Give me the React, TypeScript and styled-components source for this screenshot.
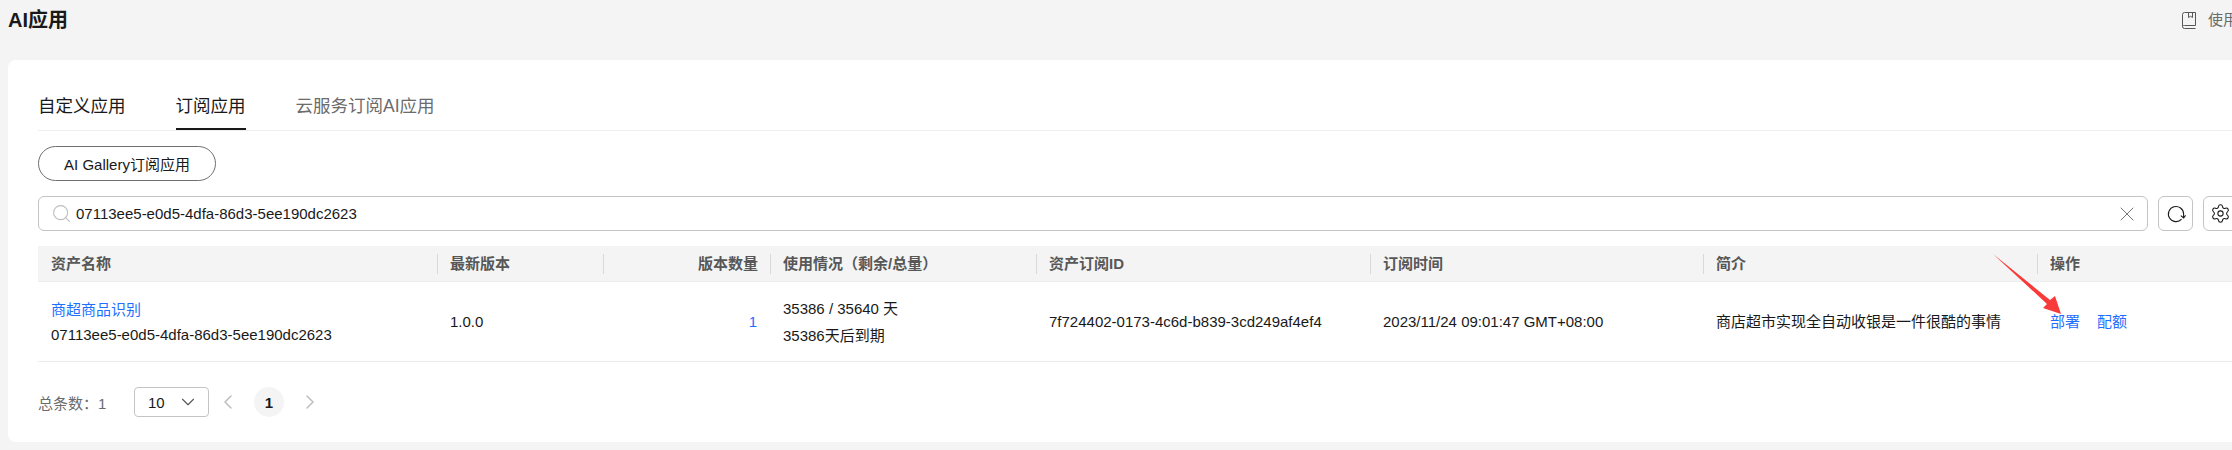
import React from 'react';
import styled, { createGlobalStyle } from 'styled-components';
import { ChevronDown, ChevronLeft, ChevronRight, Search, Settings, X } from 'lucide-react';

const GlobalStyle = createGlobalStyle`
  html, body {
    margin: 0;
    padding: 0;
    width: 2232px;
    height: 450px;
    overflow: hidden;
    background: #f4f4f4;
    font-family: "Liberation Sans", "Noto Sans CJK SC", sans-serif;
    color: #191919;
  }
  * { box-sizing: border-box; }
`;

const Page = styled.div`
  position: relative;
  width: 2232px;
  height: 450px;
  padding-left: 8px;
  overflow: hidden;
`;

const PageHeader = styled.header`
  height: 60px;
  display: flex;
  justify-content: space-between;
  align-items: flex-start;
`;

const PageTitle = styled.h1`
  margin: 7px 0 0;
  font-size: 20px;
  line-height: 26px;
  font-weight: 700;
`;

const GuideLink = styled.div`
  display: flex;
  align-items: center;
  gap: 12px;
  width: 50px;
  margin-top: 11px;
  font-size: 15px;
  line-height: 18px;
  color: #6b6b6b;
  white-space: nowrap;
`;

const Card = styled.main`
  width: 2280px;
  height: 382px;
  padding: 26px 0 0 30px;
  background: #fff;
  border-radius: 8px;
`;

const Tabs = styled.div`
  display: flex;
  gap: 50px;
  height: 45px;
  border-bottom: 1px solid #eeeeee;
`;

const Tab = styled.div<{ $active?: boolean; $muted?: boolean }>`
  height: 44px;
  padding-top: 8px;
  font-size: 17.5px;
  line-height: 24px;
  color: ${(p) => (p.$muted ? '#6b6b6b' : '#191919')};
  border-bottom: ${(p) => (p.$active ? '2px solid #191919' : 'none')};
`;

const Pill = styled.button`
  display: block;
  width: 178px;
  height: 35px;
  margin-top: 15px;
  padding: 0;
  background: #fff;
  border: 1px solid #707070;
  border-radius: 18px;
  font: inherit;
  font-size: 15px;
  color: #191919;
`;

const Toolbar = styled.div`
  display: flex;
  gap: 10px;
  margin-top: 15px;
`;

const SearchBox = styled.div`
  flex: none;
  width: 2110px;
  height: 35px;
  display: flex;
  align-items: center;
  gap: 4px;
  padding: 0 8px 0 12px;
  border: 1px solid #c4c4c4;
  border-radius: 6px;
  font-size: 15px;
`;

const SearchText = styled.span`
  flex: 1;
`;

const IconButton = styled.button`
  flex: none;
  width: 35px;
  height: 35px;
  padding: 0;
  display: flex;
  align-items: center;
  justify-content: center;
  background: #fff;
  border: 1px solid #c4c4c4;
  border-radius: 6px;
`;

const columns = '399px 166px 167px 266px 334px 333px 334px 200px';

const HeadRow = styled.div`
  display: grid;
  grid-template-columns: ${columns};
  height: 36px;
  margin-top: 15px;
  align-items: center;
  background: #f4f4f4;
  border-bottom: 1px solid #ececec;
`;

const HeadCell = styled.div<{ $right?: boolean; $first?: boolean }>`
  height: 20px;
  padding: 0 12px;
  font-size: 15px;
  line-height: 20px;
  font-weight: 700;
  color: #575757;
  white-space: nowrap;
  text-align: ${(p) => (p.$right ? 'right' : 'left')};
  border-left: ${(p) => (p.$first ? '1px solid transparent' : '1px solid #d9d9d9')};
`;

const BodyRow = styled.div`
  display: grid;
  grid-template-columns: ${columns};
  height: 80px;
  align-items: center;
  border-bottom: 1px solid #ececec;
`;

const Cell = styled.div<{ $right?: boolean; $tight?: boolean }>`
  padding: 0 13px;
  font-size: 15px;
  line-height: ${(p) => (p.$tight ? '25px' : '27px')};
  white-space: nowrap;
  text-align: ${(p) => (p.$right ? 'right' : 'left')};
`;

const Link = styled.a`
  color: #1f6fff;
  text-decoration: none;
`;

const Actions = styled.div`
  display: flex;
  gap: 17px;
`;

const Pagination = styled.div`
  display: flex;
  align-items: center;
  height: 30px;
  margin-top: 25px;
  font-size: 15px;
  color: #6b6b6b;
`;

const Total = styled.span`
  width: 96px;
`;

const PageSize = styled.div`
  width: 75px;
  height: 30px;
  display: flex;
  align-items: center;
  justify-content: space-between;
  padding: 0 9px 0 13px;
  border: 1px solid #c4c4c4;
  border-radius: 4px;
  color: #191919;
`;

const Pager = styled.div`
  display: flex;
  align-items: center;
  gap: 14px;
  margin-left: 7px;
`;

const CurrentPage = styled.span`
  width: 30px;
  height: 30px;
  display: flex;
  align-items: center;
  justify-content: center;
  border-radius: 50%;
  background: #f4f4f4;
  color: #191919;
  font-weight: 700;
`;

const Arrow = styled.svg`
  position: absolute;
  left: 1985px;
  top: 245px;
`;

function BookIcon() {
  return (
    <svg width="14" height="17" viewBox="0 0 14 17" fill="none" stroke="#575757" strokeWidth="1" style={{ flex: 'none' }}>
      <path d="M13.5 16.5H2.5a2 2 0 0 1-2-2V2.5a2 2 0 0 1 2-2h11v13H2.5a2 2 0 0 0-2 1" />
      <path d="M6.5.5v5l2-1.2 2 1.2v-5" />
    </svg>
  );
}

function RefreshIcon() {
  return (
    <svg width="20" height="20" viewBox="0 0 20 20" fill="none" stroke="#191919" strokeWidth="1.1">
      <path d="M15.6 15.2A7.6 7.6 0 1 1 17.6 10v3.4" />
      <path d="M14.8 11.6l2.8 2.4 2-2.6" />
    </svg>
  );
}

const headers = ['资产名称', '最新版本', '版本数量', '使用情况（剩余/总量）', '资产订阅ID', '订阅时间', '简介', '操作'];

export default function App() {
  return (
    <Page>
      <GlobalStyle />
      <PageHeader>
        <PageTitle>AI应用</PageTitle>
        <GuideLink>
          <BookIcon />
          使用指南
        </GuideLink>
      </PageHeader>
      <Card>
        <Tabs>
          <Tab>自定义应用</Tab>
          <Tab $active>订阅应用</Tab>
          <Tab $muted>云服务订阅AI应用</Tab>
        </Tabs>
        <Pill>AI Gallery订阅应用</Pill>
        <Toolbar>
          <SearchBox>
            <Search size={21} color="#bdbdbd" strokeWidth={1.2} />
            <SearchText>07113ee5-e0d5-4dfa-86d3-5ee190dc2623</SearchText>
            <X size={24} color="#757575" strokeWidth={1} />
          </SearchBox>
          <IconButton>
            <RefreshIcon />
          </IconButton>
          <IconButton>
            <Settings size={21} color="#191919" strokeWidth={1.2} />
          </IconButton>
        </Toolbar>
        <HeadRow>
          {headers.map((h, i) => (
            <HeadCell key={h} $first={i === 0} $right={i === 2}>
              {h}
            </HeadCell>
          ))}
        </HeadRow>
        <BodyRow>
          <Cell $tight>
            <Link>商超商品识别</Link>
            <br />
            07113ee5-e0d5-4dfa-86d3-5ee190dc2623
          </Cell>
          <Cell>1.0.0</Cell>
          <Cell $right>
            <Link>1</Link>
          </Cell>
          <Cell>
            35386 / 35640 天
            <br />
            35386天后到期
          </Cell>
          <Cell>7f724402-0173-4c6d-b839-3cd249af4ef4</Cell>
          <Cell>2023/11/24 09:01:47 GMT+08:00</Cell>
          <Cell>商店超市实现全自动收银是一件很酷的事情</Cell>
          <Cell>
            <Actions>
              <Link>部署</Link>
              <Link>配额</Link>
            </Actions>
          </Cell>
        </BodyRow>
        <Pagination>
          <Total>总条数：1</Total>
          <PageSize>
            10
            <ChevronDown size={22} color="#575757" strokeWidth={1.2} />
          </PageSize>
          <Pager>
            <ChevronLeft size={24} color="#bdbdbd" strokeWidth={1.5} />
            <CurrentPage>1</CurrentPage>
            <ChevronRight size={24} color="#bdbdbd" strokeWidth={1.5} />
          </Pager>
        </Pagination>
      </Card>
      <Arrow width="90" height="75" viewBox="0 0 90 75">
        <path d="M8 9 L65 55 L70 51 L76 69 L58 63 L62 59 Z" fill="#f73a3a" />
      </Arrow>
    </Page>
  );
}
